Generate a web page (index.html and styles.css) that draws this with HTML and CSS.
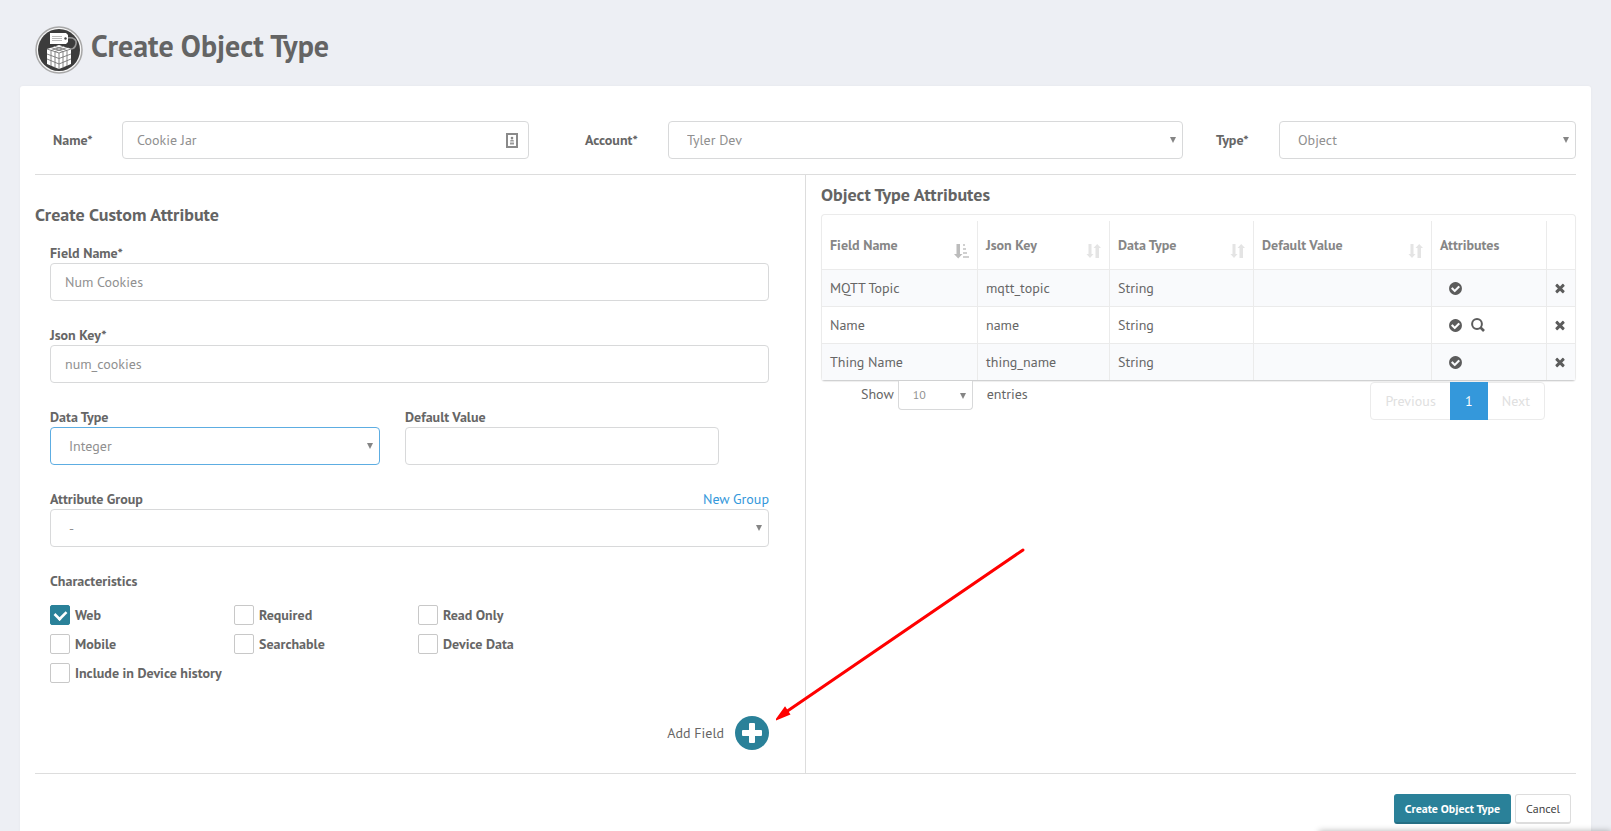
FILE: index.html
```html
<!doctype html>
<html lang="en">
    <head>
        <meta charset="utf-8">
        <title>Create Object Type</title>
        <link rel="stylesheet" href="styles.css">
    </head>
    <body>
        <svg class="symbols" xmlns="http://www.w3.org/2000/svg" aria-hidden="true">
            <symbol id="check-circle" viewBox="0 0 1792 1792">
                <path d="M1412 734q0-28-18-46l-91-90q-19-19-45-19t-45 19l-408 407-226-226q-19-19-45-19t-45 19l-91 90q-18 18-18 46 0 27 18 45l362 362q19 19 45 19 27 0 46-19l543-543q18-18 18-45zm252 162q0 209-103 385.5t-279.5 279.5-385.5 103-385.5-103-279.5-279.5-103-385.5 103-385.5 279.5-279.5 385.5-103 385.5 103 279.5 279.5 103 385.5z" />
            </symbol>
            <symbol id="times" viewBox="0 0 1792 1792">
                <path d="M1490 1322q0 40-28 68l-136 136q-28 28-68 28t-68-28l-294-294-294 294q-28 28-68 28t-68-28l-136-136q-28-28-28-68t28-68l294-294-294-294q-28-28-28-68t28-68l136-136q28-28 68-28t68 28l294 294 294-294q28-28 68-28t68 28l136 136q28 28 28 68t-28 68l-294 294 294 294q28 28 28 68z" />
            </symbol>
            <symbol id="search" viewBox="0 0 14 14">
                <circle cx="6" cy="6" r="4.9" fill="none" stroke="#5c5c5c" stroke-width="2" />
                <path d="M9.5 9.5L13 13" stroke="#5c5c5c" stroke-width="2.6" />
            </symbol>
            <symbol id="sort-both" viewBox="0 0 15 16">
                <path d="M2.5 1h3v10h2L4 15 .5 11h2zM9.500 15h3.500V5h2L11.200 1 7.500 5h2z" />
            </symbol>
            <symbol id="sort-asc" viewBox="0 0 15 16">
                <path d="M2.500 1h3.500v10h2.500L4.200 15.500 0 11h2.500z" />
                <path d="M9 1h2v2H9zM9 5h3v2H9zM9 9h4v2H9zM9 13h6v2H9z" opacity=".7" />
            </symbol>
        </svg>

        <header class="page-head">
            <svg class="logo" viewBox="0 0 48 48" aria-hidden="true">
                <circle cx="24" cy="24" r="23" fill="#f6f6f6" stroke="#a8a8a8" stroke-width="1.5" />
                <circle cx="24" cy="24" r="21" fill="#3c3c3c" />
                <path d="M32 12C39 11 42 14 41 18C40 23 36 24 33 22" fill="none" stroke="#999" stroke-width="1.5" />
                <path d="M15 7h16l2 2v7l-2 2H15z" fill="#fff" />
                <path d="M17 10.500h10M17 12.500h10M17 14.500h10" stroke="#bbb" stroke-width="1" />
                <circle cx="30.500" cy="12.500" r="1.200" fill="#444" />
                <path d="M12 23L24 19L36 23V38L24 43L12 38z" fill="#fff" />
                <path d="M12 23L24 27L36 23M12 28L24 32.500L36 28M12 33L24 38L36 33M24 27V43M16 24.500V40M20 26V41.500M28 26V41.500M32 24.500V40M16 21.500L28 25.500M20 20.500L32 24.500M32 21.500L20 25.500M28 20.500L16 24.500" fill="none" stroke="#777" stroke-width=".9" />
            </svg>
            <h1>Create Object Type</h1>
        </header>

        <main class="card">
            <div class="general">
                <label class="name-label" for="name">Name*</label>
                <div class="with-icon">
                    <input id="name" class="input" type="text" value="Cookie Jar">
                    <svg class="contact" viewBox="0 0 12 15" aria-hidden="true">
                        <path d="M1 1h10v13H1z" fill="none" stroke="#8a8a8a" stroke-width="2" />
                        <circle cx="6" cy="5" r="1.300" fill="#888" />
                        <path d="M4 8.500q0-2 2-2t2 2zM4 9.500h4v2H4z" fill="#999" />
                    </svg>
                </div>
                <label class="account-label" for="account">Account*</label>
                <div class="select">
                    <select id="account" class="input"><option>Tyler Dev</option></select>
                </div>
                <label class="type-label" for="type">Type*</label>
                <div class="select">
                    <select id="type" class="input"><option>Object</option></select>
                </div>
            </div>

            <div class="columns">
                <section class="custom">
                    <h2>Create Custom Attribute</h2>
                    <div class="fields">
                        <div class="field">
                            <label for="field-name">Field Name*</label>
                            <input id="field-name" class="input" type="text" value="Num Cookies">
                        </div>
                        <div class="field">
                            <label for="json-key">Json Key*</label>
                            <input id="json-key" class="input" type="text" value="num_cookies">
                        </div>
                        <div class="pair">
                            <div class="field">
                                <label for="data-type">Data Type</label>
                                <div class="select">
                                    <select id="data-type" class="input active"><option>Integer</option></select>
                                </div>
                            </div>
                            <div class="field">
                                <label for="default-value">Default Value</label>
                                <input id="default-value" class="input" type="text">
                            </div>
                        </div>
                        <div class="field">
                            <div class="label-row">
                                <label for="group">Attribute Group</label>
                                <a href="#">New Group</a>
                            </div>
                            <div class="select">
                                <select id="group" class="input"><option>-</option></select>
                            </div>
                        </div>

                        <fieldset class="checks">
                            <legend>Characteristics</legend>
                            <div class="check-grid">
                                <label><input type="checkbox" checked>Web</label>
                                <label><input type="checkbox">Required</label>
                                <label><input type="checkbox">Read Only</label>
                                <label><input type="checkbox">Mobile</label>
                                <label><input type="checkbox">Searchable</label>
                                <label><input type="checkbox">Device Data</label>
                                <label><input type="checkbox">Include in Device history</label>
                            </div>
                        </fieldset>

                        <div class="add-row">
                            <span id="add-label">Add Field</span>
                            <button class="add" type="button" aria-labelledby="add-label">
                                <svg viewBox="0 0 20 20" aria-hidden="true">
                                    <path d="M8 0h4q1 0 1 1v6h6q1 0 1 1v4q0 1-1 1h-6v6q0 1-1 1H8q-1 0-1-1v-6H1q-1 0-1-1V8q0-1 1-1h6V1q0-1 1-1z" />
                                </svg>
                            </button>
                            <svg class="arrow" viewBox="0 0 250 174" aria-hidden="true">
                                <path d="M247 3L10 165" stroke="#f00" stroke-width="3" stroke-linecap="round" />
                                <path d="M1 172L9 161L13 167z" fill="#f00" stroke="#f00" stroke-width="2" />
                            </svg>
                        </div>
                    </div>
                </section>

                <section class="attributes">
                    <h2>Object Type Attributes</h2>
                    <div class="table-box">
                        <table>
                            <colgroup>
                                <col class="col-field">
                                <col class="col-key">
                                <col class="col-type">
                                <col class="col-default">
                                <col class="col-attrs">
                                <col class="col-remove">
                            </colgroup>
                            <thead>
                                <tr>
                                    <th><div class="sort sorted">Field Name<svg><use href="#sort-asc" /></svg></div></th>
                                    <th><div class="sort">Json Key<svg><use href="#sort-both" /></svg></div></th>
                                    <th><div class="sort">Data Type<svg><use href="#sort-both" /></svg></div></th>
                                    <th><div class="sort">Default Value<svg><use href="#sort-both" /></svg></div></th>
                                    <th>Attributes</th>
                                    <th></th>
                                </tr>
                            </thead>
                            <tbody>
                                <tr>
                                    <td>MQTT Topic</td>
                                    <td>mqtt_topic</td>
                                    <td>String</td>
                                    <td></td>
                                    <td><div class="flags"><svg><use href="#check-circle" /></svg></div></td>
                                    <td><button class="remove" type="button" aria-label="Remove"><svg><use href="#times" /></svg></button></td>
                                </tr>
                                <tr>
                                    <td>Name</td>
                                    <td>name</td>
                                    <td>String</td>
                                    <td></td>
                                    <td><div class="flags"><svg><use href="#check-circle" /></svg><svg class="lens"><use href="#search" /></svg></div></td>
                                    <td><button class="remove" type="button" aria-label="Remove"><svg><use href="#times" /></svg></button></td>
                                </tr>
                                <tr>
                                    <td>Thing Name</td>
                                    <td>thing_name</td>
                                    <td>String</td>
                                    <td></td>
                                    <td><div class="flags"><svg><use href="#check-circle" /></svg></div></td>
                                    <td><button class="remove" type="button" aria-label="Remove"><svg><use href="#times" /></svg></button></td>
                                </tr>
                            </tbody>
                        </table>
                    </div>
                    <div class="table-foot">
                        <label class="length">
                            Show
                            <span class="select small"><select class="input"><option>10</option></select></span>
                            <span class="entries">entries</span>
                        </label>
                        <nav class="pager">
                            <button type="button" disabled>Previous</button>
                            <button type="button" class="current">1</button>
                            <button type="button" disabled>Next</button>
                        </nav>
                    </div>
                </section>
            </div>

            <div class="actions">
                <button class="btn primary" type="button">Create Object Type</button>
                <button class="btn" type="button">Cancel</button>
            </div>
        </main>
        <div class="drawer"></div>
    </body>
</html>
```

FILE: styles.css
```css
* {
    box-sizing: border-box;
}

body {
    display: flex;
    flex-direction: column;
    min-height: 100vh;
    margin: 0;
    background: #edeff4;
    color: #666;
    font: 14px/20px "PT Sans", Lato, sans-serif;
}

h1, h2 {
    margin: 0;
    color: #646464;
}

h1 {
    font-size: 30px;
    line-height: 40px;
}

h2 {
    font-size: 18px;
    line-height: 20px;
}

button, input, select {
    font: inherit;
    color: inherit;
}

label, legend {
    font-weight: bold;
}

a {
    color: #3498db;
    text-decoration: none;
}

.symbols {
    position: absolute;
    width: 0;
    height: 0;
}

.page-head {
    display: flex;
    gap: 8px;
    padding: 26px 35px 12px;
}

.logo {
    width: 48px;
    height: 48px;
}

.card {
    flex: 1;
    margin: 0 20px;
    padding: 35px 15px 0;
    background: #fff;
    border-radius: 3px 3px 0 0;
    box-shadow: 0 0 2px #e4e4e8;
}

.general {
    display: grid;
    grid-template-columns: 87fr 407fr 139fr 515fr 96fr 297fr;
    align-items: center;
    padding-bottom: 15px;
    border-bottom: 1px solid #ddd;
}

.name-label {
    padding-left: 18px;
}

.account-label {
    padding-left: 56px;
}

.type-label {
    padding-left: 33px;
}

.input {
    display: block;
    width: 100%;
    height: 38px;
    padding: 0 14px;
    border: 1px solid #d8d9da;
    border-radius: 4px;
    background: #fff;
    color: #909090;
    appearance: none;
}

.input.active {
    border-color: #5dade2;
}

.with-icon,
.select {
    position: relative;
}

.select .input {
    padding: 0 18px;
}

.select::after {
    content: "";
    position: absolute;
    top: 50%;
    right: 7px;
    margin-top: -3px;
    border: 3px solid transparent;
    border-top: 6px solid #858585;
    border-bottom: 0;
}

.contact {
    position: absolute;
    top: 12px;
    right: 11px;
    width: 12px;
    height: 15px;
}

.columns {
    display: grid;
    grid-template-columns: 771fr 770fr;
    border-bottom: 1px solid #ddd;
}

.custom {
    padding: 30px 36px 23px 0;
}

.fields {
    padding: 18px 0 0 15px;
}

.field {
    margin-bottom: 24px;
}

.field label {
    display: block;
}

.pair {
    display: grid;
    grid-template-columns: 330fr 314fr 25fr;
    gap: 25px;
}

.label-row {
    display: flex;
    justify-content: space-between;
}

.checks {
    margin: 0;
    padding: 0;
    border: 0;
}

.checks legend {
    padding: 0;
}

.check-grid {
    display: grid;
    grid-template-columns: 184px 184px 184px;
    gap: 9px 0;
    padding-top: 14px;
}

.check-grid label {
    display: flex;
    gap: 5px;
    white-space: nowrap;
}

.check-grid input {
    width: 20px;
    height: 20px;
    margin: 0;
    border: 1px solid #c8c8c8;
    border-radius: 2px;
    appearance: none;
}

.check-grid input:checked {
    display: grid;
    place-items: center;
    border-color: #2a8199;
    background: #2a8199;
}

.check-grid input:checked::after {
    content: "";
    width: 10px;
    height: 7px;
    margin-bottom: 3px;
    border: solid #fff;
    border-width: 0 0 3px 3px;
    transform: rotate(-45deg) scale(.85);
}

.add-row {
    position: relative;
    display: flex;
    align-items: center;
    justify-content: flex-end;
    gap: 11px;
    padding-top: 33px;
}

.add {
    display: grid;
    place-items: center;
    width: 34px;
    height: 34px;
    padding: 0;
    border: 0;
    border-radius: 50%;
    background: #2a8199;
}

.add svg {
    width: 20px;
    height: 20px;
    fill: #fff;
}

/* points at the add button from across the divider */
.arrow {
    position: absolute;
    left: 100%;
    bottom: 29px;
    width: 250px;
    height: 174px;
    margin-left: 7px;
}

.attributes {
    padding: 10px 0 0 15px;
    border-left: 1px solid #ddd;
}

.table-box {
    margin-top: 9px;
    padding-top: 6px;
    border: 1px solid #ebebeb;
    border-bottom-color: #d0d1d2;
    border-radius: 4px;
    box-shadow: 0 1px 1px #eee;
}

table {
    width: 100%;
    table-layout: fixed;
    border-spacing: 0;
}

.col-field { width: 155px; }
.col-key { width: 132px; }
.col-type { width: 144px; }
.col-default { width: 178px; }
.col-attrs { width: 115px; }
.col-remove { width: 29px; }

th, td {
    border-left: 1px solid #ebebeb;
    text-align: left;
}

th:first-child,
td:first-child {
    border-left: 0;
}

th {
    height: 49px;
    padding: 14px 8px 0;
    border-bottom: 1px solid #ebebeb;
    color: #868686;
    vertical-align: top;
}

td {
    height: 37px;
    padding: 0 8px;
    border-bottom: 1px solid #ebebeb;
}

tbody tr:nth-child(odd) {
    background: #f9fafc;
}

tbody tr:last-child td {
    height: 36px;
    border-bottom: 0;
}

.sort {
    display: flex;
    justify-content: space-between;
}

.sort svg {
    width: 15px;
    height: 16px;
    margin-top: 8px;
    fill: #e4e4e4;
}

.sorted svg {
    fill: #bcbcbc;
}

.flags {
    display: flex;
    align-items: center;
    gap: 8px;
    padding-left: 8px;
}

.flags svg {
    width: 15px;
    height: 15px;
    fill: #5c5c5c;
}

.flags .lens {
    width: 14px;
    height: 14px;
}

.remove {
    display: block;
    padding: 0;
    border: 0;
    background: none;
}

.remove svg {
    display: block;
    width: 14px;
    height: 14px;
    fill: #5c5c5c;
}

td:last-child {
    padding: 0 6px;
}

.table-foot {
    display: flex;
    justify-content: space-between;
    padding: 0 31px 0 40px;
}

.length {
    display: flex;
    gap: 4px;
    line-height: 26px;
    font-weight: normal;
}

.small {
    width: 75px;
    height: 29px;
}

.small .input {
    height: 29px;
    padding: 0 14px;
    border-top: 0;
    border-radius: 0 0 4px 4px;
    font-size: 12px;
}

.entries {
    margin-left: 10px;
}

.pager {
    display: flex;
    height: 38px;
    margin-top: 1px;
    border: 1px solid #ebebeb;
    border-radius: 4px;
}

.pager button {
    margin: -1px 0;
    padding: 0 14px;
    border: 0;
    background: none;
}

.pager button:disabled {
    color: #e0e0e0;
}

.pager .current {
    width: 38px;
    background: #3498db;
    color: #fff;
}

.actions {
    display: flex;
    justify-content: flex-end;
    gap: 4px;
    padding: 20px 5px 7px;
}

.btn {
    height: 30px;
    padding: 0 10px;
    border: 1px solid #ddd;
    border-bottom-width: 2px;
    border-radius: 3px;
    background: #fff;
    color: #444;
    font-size: 12px;
}

.primary {
    border-color: #2a8199;
    border-bottom-color: #256f84;
    background: #2a8199;
    color: #fff;
    font-weight: bold;
}

/* collapsed drawer, only its shadow shows above the window edge */
.drawer {
    position: fixed;
    right: 0;
    bottom: -10px;
    width: 292px;
    height: 10px;
    box-shadow: 0 0 6px rgba(0, 0, 0, .3);
}
```
